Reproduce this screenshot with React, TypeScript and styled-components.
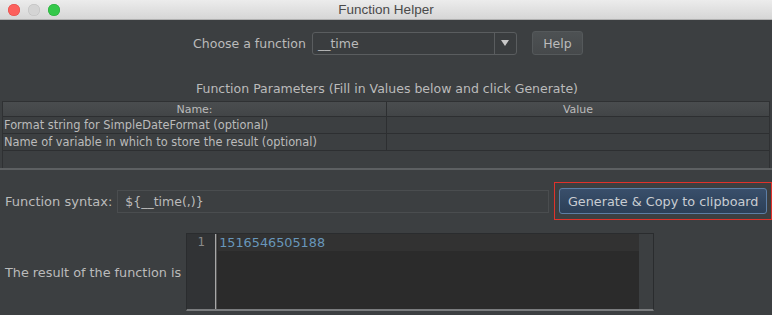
import React from "react";
import styled, { createGlobalStyle } from "styled-components";

const Global = createGlobalStyle`
  html, body { margin: 0; padding: 0; background: #3c3f41; }
  #root { width: 772px; height: 315px; overflow: hidden; }
`;

const Window = styled.div`
  width: 772px;
  height: 315px;
  display: flex;
  flex-direction: column;
  background: #3c3f41;
  font-family: "DejaVu Sans", "Liberation Sans", sans-serif;
  font-size: 12px;
  color: #bbbbbb;
`;

const TitleBar = styled.div`
  height: 20px;
  flex: none;
  display: grid;
  grid-template-columns: 80px 1fr 80px;
  align-items: center;
  background: linear-gradient(#ececec, #d6d6d6);
  border-bottom: 1px solid #b0b0b0;
  box-sizing: border-box;
`;

const Lights = styled.div`
  display: flex;
  gap: 8px;
  padding-left: 8px;
`;

const Light = styled.span<{ $c: string; $b: string }>`
  width: 12px;
  height: 12px;
  border-radius: 50%;
  background: ${(p) => p.$c};
  box-shadow: inset 0 0 0 0.5px ${(p) => p.$b};
`;

const Title = styled.div`
  text-align: center;
  font-size: 13.5px;
  color: #4a4a4a;
  font-family: "Liberation Sans", sans-serif;
`;

const ChooseRow = styled.div`
  display: flex;
  justify-content: center;
  align-items: center;
  margin-top: 11px;
  margin-left: 4px;
  height: 24px;
`;

const Label = styled.span<{ $size?: number }>`
  font-size: ${(p) => p.$size ?? 12.5}px;
  color: #bbbbbb;
  white-space: nowrap;
`;

const Combo = styled.div`
  margin-left: 6px;
  width: 205px;
  height: 23px;
  box-sizing: border-box;
  border: 1px solid #5a5d5f;
  border-radius: 3px;
  background: #3a3d3f;
  display: flex;
  align-items: stretch;
`;

const ComboText = styled.div`
  flex: 1;
  padding-left: 5px;
  display: flex;
  align-items: center;
  font-size: 12.5px;
  color: #bbbbbb;
`;

const ComboArrow = styled.div`
  width: 21px;
  border-left: 1px solid #5a5d5f;
  display: flex;
  align-items: center;
  justify-content: center;
`;

const HelpButton = styled.div`
  margin-left: 15px;
  width: 51px;
  height: 24px;
  box-sizing: border-box;
  border: 1px solid #55595b;
  border-radius: 3px;
  background: linear-gradient(#4d5153, #46494b);
  display: flex;
  align-items: center;
  justify-content: center;
  font-size: 12.5px;
  color: #bbbbbb;
`;

const SectionTitle = styled.div`
  margin-top: 26px;
  text-align: center;
  font-size: 12.5px;
  color: #bbbbbb;
  padding-left: 2px;
`;

const TableArea = styled.div`
  margin: 5px 2px 0 2px;
  height: 67px;
  box-sizing: border-box;
  border: 1px solid #2f3133;
  border-bottom: none;
  display: flex;
  flex-direction: column;
`;

const TableRow = styled.div<{ $header?: boolean }>`
  display: grid;
  grid-template-columns: 383px 1fr;
  height: ${(p) => (p.$header ? 14 : 16)}px;
  background: ${(p) => (p.$header ? "linear-gradient(#4a4d4f, #424547)" : "#3c3f41")};
  border-bottom: 1px solid #2d2f31;
`;

const Cell = styled.div<{ $center?: boolean; $header?: boolean }>`
  display: flex;
  align-items: center;
  justify-content: ${(p) => (p.$center ? "center" : "flex-start")};
  padding-left: ${(p) => (p.$center ? 0 : 1)}px;
  font-size: ${(p) => (p.$header ? 11 : 11.4)}px;
  color: #bbbbbb;
  white-space: nowrap;
  overflow: hidden;
  & + & {
    border-left: ${(p) => (p.$header ? "2px solid #2f3133" : "1px solid #2d2f31")};
  }
`;

const Divider = styled.div`
  height: 2px;
  flex: none;
  background: #5d6062;
`;

const SyntaxRow = styled.div`
  display: flex;
  align-items: center;
  margin-top: 11px;
  padding-left: 5px;
  height: 40px;
`;

const SyntaxField = styled.div`
  margin-left: 5px;
  width: 433px;
  height: 23px;
  box-sizing: border-box;
  border: 1px solid #4a4d4f;
  background: #3c3f41;
  display: flex;
  align-items: center;
  padding-left: 7px;
  font-size: 12.5px;
  color: #bbbbbb;
`;

const Highlight = styled.div`
  margin-left: 5px;
  width: 218px;
  height: 38px;
  box-sizing: border-box;
  border: 1.5px solid #e0322b;
  display: flex;
  align-items: center;
  justify-content: center;
`;

const GenerateButton = styled.div`
  width: 208px;
  height: 26px;
  box-sizing: border-box;
  border: 1px solid #5c7ea6;
  border-radius: 3px;
  background: linear-gradient(#394f6b, #2c3f57);
  display: flex;
  align-items: center;
  justify-content: center;
  font-size: 12.8px;
  color: #c9cdd2;
`;

const ResultRow = styled.div`
  display: flex;
  align-items: center;
  margin-top: 12px;
  padding-left: 5px;
`;

const Editor = styled.div`
  margin-left: 5px;
  width: 468px;
  height: 78px;
  box-sizing: border-box;
  border: 1px solid #2a2c2e;
  border-bottom: 2px solid #7a7c7e;
  display: flex;
  background: #2b2b2b;
`;

const Gutter = styled.div`
  width: 28px;
  flex: none;
  background: #313335;
  border-right: 1px solid #a8a8a8;
  box-shadow: 1px 0 0 #555;
  display: flex;
  justify-content: center;
  padding-top: 1px;
  font-family: "DejaVu Sans Mono", monospace;
  font-size: 12px;
  color: #8a8a8a;
`;

const Code = styled.div`
  flex: 1;
  display: flex;
  flex-direction: column;
  margin-left: 2px;
`;

const CurrentLine = styled.div`
  height: 17px;
  background: #323232;
  display: flex;
  align-items: center;
  padding-left: 1px;
  font-family: "DejaVu Sans", sans-serif;
  font-size: 12.8px;
  color: #6897bb;
`;

const Scrollbar = styled.div`
  width: 14px;
  flex: none;
  background: #3c3f41;
`;

export default function App() {
  return (
    <>
      <Global />
      <Window>
        <TitleBar>
          <Lights>
            <Light $c="#fc605c" $b="#de4a45" />
            <Light $c="#d4d4d4" $b="#bdbdbd" />
            <Light $c="#34c84a" $b="#26a83a" />
          </Lights>
          <Title>Function Helper</Title>
          <div />
        </TitleBar>
        <ChooseRow>
          <Label>Choose a function</Label>
          <Combo>
            <ComboText>__time</ComboText>
            <ComboArrow>
              <svg width="8" height="6" viewBox="0 0 8 6">
                <path d="M0 0 H8 L4 6 Z" fill="#c8c8c8" />
              </svg>
            </ComboArrow>
          </Combo>
          <HelpButton>Help</HelpButton>
        </ChooseRow>
        <SectionTitle>Function Parameters (Fill in Values below and click Generate)</SectionTitle>
        <TableArea>
          <TableRow $header>
            <Cell $center $header>Name:</Cell>
            <Cell $center $header>Value</Cell>
          </TableRow>
          <TableRow>
            <Cell>Format string for SimpleDateFormat (optional)</Cell>
            <Cell />
          </TableRow>
          <TableRow>
            <Cell>Name of variable in which to store the result (optional)</Cell>
            <Cell />
          </TableRow>
        </TableArea>
        <Divider />
        <SyntaxRow>
          <Label $size={13}>Function syntax:</Label>
          <SyntaxField>{"${__time(,)}"}</SyntaxField>
          <Highlight>
            <GenerateButton>Generate &amp; Copy to clipboard</GenerateButton>
          </Highlight>
        </SyntaxRow>
        <ResultRow>
          <Label $size={12.8}>The result of the function is</Label>
          <Editor>
            <Gutter>1</Gutter>
            <Code>
              <CurrentLine>1516546505188</CurrentLine>
            </Code>
            <Scrollbar />
          </Editor>
        </ResultRow>
      </Window>
    </>
  );
}
